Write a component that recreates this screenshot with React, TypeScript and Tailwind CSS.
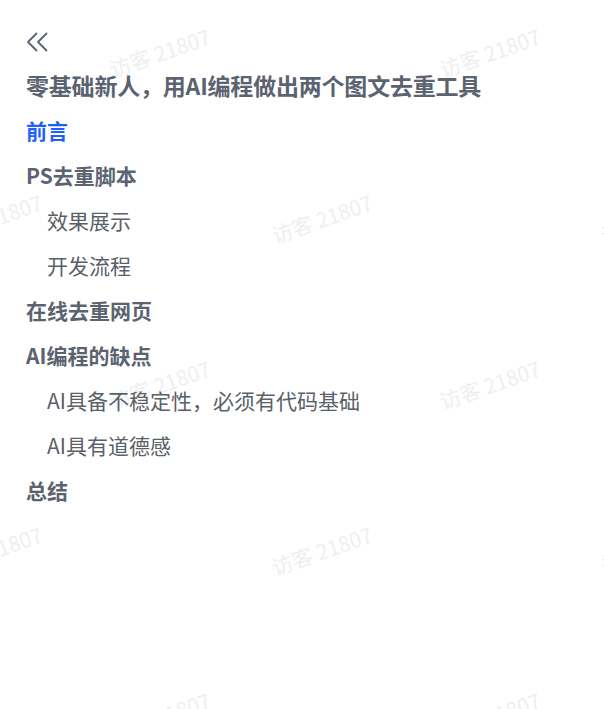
import { Fragment } from "react";

interface TocItem {
  label: string;
  level: 1 | 2;
  active?: boolean;
}

const tocItems: TocItem[] = [
  { label: "前言", level: 1, active: true },
  { label: "PS去重脚本", level: 1 },
  { label: "效果展示", level: 2 },
  { label: "开发流程", level: 2 },
  { label: "在线去重网页", level: 1 },
  { label: "AI编程的缺点", level: 1 },
  { label: "AI具备不稳定性，必须有代码基础", level: 2 },
  { label: "AI具有道德感", level: 2 },
  { label: "总结", level: 1 },
];

// watermark grid: 330px apart, every other row shifted by half a cell
const watermarks: { x: number; y: number }[] = [];
for (let row = 0; row < 5; row++) {
  for (let col = -1; col < 3; col++) {
    watermarks.push({
      x: 160 + (row % 2 === 1 ? 162 : 0) + col * 330,
      y: 53 + row * 166,
    });
  }
}

function Watermark() {
  return (
    <div className="pointer-events-none absolute inset-0 overflow-hidden select-none">
      {watermarks.map((w, i) => (
        <span
          key={i}
          className="absolute -translate-x-1/2 -translate-y-1/2 -rotate-[19deg] whitespace-nowrap text-[21px] text-[#eeeff1]"
          style={{ left: w.x, top: w.y }}
        >
          访客 21807
        </span>
      ))}
    </div>
  );
}

export default function App() {
  return (
    <div
      className="relative h-[709px] w-full overflow-hidden bg-white"
      style={{ fontFamily: '"Noto Sans CJK SC", "Noto Sans", sans-serif' }}
    >
      <Watermark />
      <div className="relative flex flex-col px-[26px] pt-[32px]">
        {/* Collapse toggle */}
        <button className="flex h-[20px] w-[22px] items-center text-[#5c6370]" aria-label="收起目录">
          <svg width="22" height="20" viewBox="0 0 22 20" fill="none" stroke="currentColor" strokeWidth="1.8" strokeLinecap="round" strokeLinejoin="round">
            <path d="M10.5 1.5 2 10l8.5 8.5" />
            <path d="M20.5 1.5 12 10l8.5 8.5" />
          </svg>
        </button>

        {/* Table of contents */}
        <nav className="mt-[11px] flex flex-col">
          <div className="flex h-[45px] items-center text-[23px] font-bold tracking-[-0.2px] text-[#5c6370]">
            零基础新人，用AI编程做出两个图文去重工具
          </div>
          {tocItems.map((item) => (
            <Fragment key={item.label}>
              {item.level === 1 ? (
                <div
                  className={`flex h-[45px] items-center text-[21px] font-bold ${
                    item.active ? "text-[#1f5fff]" : "text-[#5c6370]"
                  }`}
                >
                  {item.label}
                </div>
              ) : (
                <div className="flex h-[45px] items-center pl-[21px] text-[21px] font-normal text-[#5a5f68]">
                  {item.label}
                </div>
              )}
            </Fragment>
          ))}
        </nav>
      </div>
    </div>
  );
}
